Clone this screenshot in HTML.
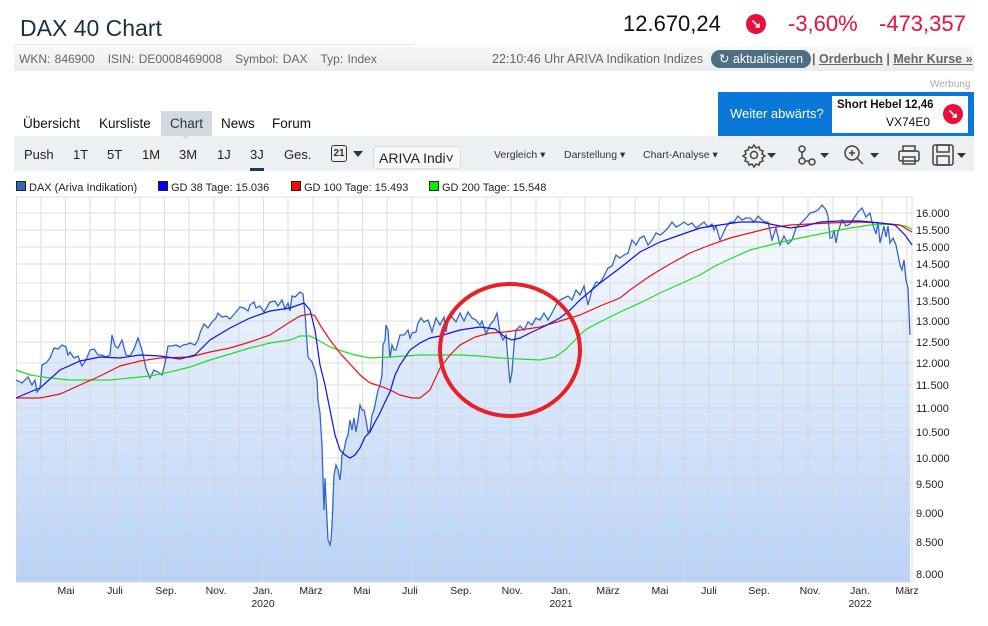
<!DOCTYPE html>
<html><head><meta charset="utf-8"><style>
body{margin:0;width:988px;height:626px;background:#fff;font-family:"Liberation Sans",sans-serif;position:relative;overflow:hidden}
.a{position:absolute;white-space:nowrap}
</style></head><body>
<div class="a" style="left:20px;top:15px;font-size:23px;color:#1b2f45">DAX 40 Chart</div>
<div class="a" style="left:14px;top:44px;width:400px;height:1px;background:#e3e3e3"></div>
<div class="a" style="left:14px;top:47px;width:960px;height:24px;background:linear-gradient(#f8f8f8,#ececec)"></div>
<div class="a" style="left:19px;top:52px;font-size:12px;color:#666;word-spacing:1px">WKN: 846900 &nbsp;&nbsp;ISIN: DE0008469008 &nbsp;&nbsp;Symbol: DAX &nbsp;&nbsp;Typ: Index</div>
<div class="a" style="left:492px;top:52px;font-size:12.5px;color:#666">22:10:46 Uhr ARIVA Indikation Indizes</div>
<div class="a" style="left:711px;top:50px;width:100px;height:18px;border-radius:9px;background:#4c6f86;color:#fff;font-size:12.5px;line-height:18px;text-align:center">↻ aktualisieren</div>
<div class="a" style="left:812px;top:52px;font-size:12.5px;color:#666;font-weight:bold">| <u>Orderbuch</u> | <u>Mehr Kurse »</u></div>
<div class="a" style="left:623px;top:11px;font-size:22px;color:#111">12.670,24</div>
<div class="a" style="left:746px;top:14px;width:20px;height:20px;border-radius:50%;background:#e8103a;color:#fff;font-size:13px;line-height:20px;text-align:center;font-weight:bold">↘</div>
<div class="a" style="left:788px;top:11px;font-size:22px;color:#e8103a">-3,60%</div>
<div class="a" style="left:879px;top:11px;font-size:22px;color:#e8103a">-473,357</div>
<div class="a" style="left:930px;top:79px;font-size:10px;color:#aaa">Werbung</div>
<div class="a" style="left:718px;top:92px;width:256px;height:44px;background:#0a78d8"></div>
<div class="a" style="left:730px;top:106px;font-size:13px;color:#fff">Weiter abwärts?</div>
<div class="a" style="left:832px;top:96px;width:136px;height:37px;background:#fff"></div>
<div class="a" style="left:837px;top:99px;font-size:11.5px;font-weight:bold;color:#111">Short Hebel 12,46</div>
<div class="a" style="left:886px;top:115px;font-size:12px;color:#111">VX74E0</div>
<div class="a" style="left:943px;top:104px;width:20px;height:20px;border-radius:50%;background:#e8103a;color:#fff;font-size:13px;line-height:20px;text-align:center;font-weight:bold">↘</div>
<div class="a" style="left:161px;top:111px;width:51px;height:25px;background:#d1dae1"></div>
<div class="a" style="left:14px;top:136px;width:960px;height:35px;background:#edf0f3"></div>
<div class="a" style="left:180px;top:133px;width:0;height:0;border-left:6px solid transparent;border-right:6px solid transparent;border-top:6px solid #d1dae1"></div>
<div class="a" style="left:23px;top:116px;font-size:13.5px;color:#111">Übersicht</div>
<div class="a" style="left:99px;top:116px;font-size:13.5px;color:#111">Kursliste</div>
<div class="a" style="left:170px;top:116px;font-size:13.5px;color:#333">Chart</div>
<div class="a" style="left:221px;top:116px;font-size:13.5px;color:#111">News</div>
<div class="a" style="left:272px;top:116px;font-size:13.5px;color:#111">Forum</div>
<div class="a" style="left:24px;top:147px;font-size:13px;color:#222">Push</div>
<div class="a" style="left:73px;top:147px;font-size:13px;color:#222">1T</div>
<div class="a" style="left:107px;top:147px;font-size:13px;color:#222">5T</div>
<div class="a" style="left:142px;top:147px;font-size:13px;color:#222">1M</div>
<div class="a" style="left:179px;top:147px;font-size:13px;color:#222">3M</div>
<div class="a" style="left:217px;top:147px;font-size:13px;color:#222">1J</div>
<div class="a" style="left:250px;top:147px;font-size:13px;color:#222">3J</div>
<div class="a" style="left:250px;top:168px;width:14px;height:3px;background:#1d3a55"></div>
<div class="a" style="left:284px;top:147px;font-size:13px;color:#222">Ges.</div>
<div class="a" style="left:331px;top:145px;width:14px;height:15px;border:1.5px solid #333;border-radius:3px;font-size:10px;font-weight:bold;text-align:center;line-height:16px;color:#333">21</div>
<div class="a" style="left:353px;top:151px;border-left:5px solid transparent;border-right:5px solid transparent;border-top:6px solid #333"></div>
<div class="a" style="left:373px;top:146px;width:88px;height:23px;background:#f7f7f7;border:1px solid #ddd;border-radius:4px;font-size:14px;line-height:23px;padding-left:5px;box-sizing:border-box;color:#222">ARIVA Indi˅</div>
<div class="a" style="left:494px;top:149px;font-size:10.5px;color:#333">Vergleich ▾</div>
<div class="a" style="left:564px;top:149px;font-size:10.5px;color:#333">Darstellung ▾</div>
<div class="a" style="left:643px;top:149px;font-size:10.5px;color:#333">Chart-Analyse ▾</div>
<svg class="a" style="left:740px;top:140px" width="240" height="30" viewBox="0 0 240 30">
<g fill="none" stroke="#444" stroke-width="1.5">
<circle cx="14" cy="15" r="3.5"/><path d="M14 5l2 3 3-1 1 3 3 1-1 3 3 2-3 2 1 3-3 1-1 3-3-1-2 3-2-3-3 1-1-3-3-1 1-3-3-2 3-2-1-3 3-1 1-3 3 1z"/>
<circle cx="62" cy="9" r="3"/><circle cx="62" cy="21" r="3"/><circle cx="72" cy="22" r="3"/><path d="M62 12v6M65 21h4"/>
<circle cx="112" cy="13" r="7"/><path d="M117 18l6 6M109 13h6M112 10v6"/>
<rect x="159" y="11" width="20" height="10" rx="2"/><rect x="163" y="6" width="12" height="5"/><rect x="163" y="17" width="12" height="7"/>
<rect x="193" y="5" width="20" height="20" rx="2"/><rect x="197" y="5" width="12" height="7"/><rect x="197" y="16" width="12" height="9"/>
</g><g fill="#333"><path d="M27 13h9l-4.5 5z"/><path d="M80 13h9l-4.5 5z"/><path d="M130 13h9l-4.5 5z"/><path d="M217 13h9l-4.5 5z"/></g></svg>
<div class="a" style="left:16px;top:181px;font-size:11px;color:#222"><span style="display:inline-block;width:8px;height:8px;background:#3366bb;border:1px solid #222;margin-right:3px"></span>DAX (Ariva Indikation)</div>
<div class="a" style="left:158px;top:181px;font-size:11px;color:#222"><span style="display:inline-block;width:8px;height:8px;background:#0000ff;border:1px solid #222;margin-right:3px"></span>GD 38 Tage: 15.036</div>
<div class="a" style="left:291px;top:181px;font-size:11px;color:#222"><span style="display:inline-block;width:8px;height:8px;background:#ff0000;border:1px solid #222;margin-right:3px"></span>GD 100 Tage: 15.493</div>
<div class="a" style="left:429px;top:181px;font-size:11px;color:#222"><span style="display:inline-block;width:8px;height:8px;background:#00ee00;border:1px solid #222;margin-right:3px"></span>GD 200 Tage: 15.548</div>
<svg class="a" style="left:0;top:0" width="988" height="626" viewBox="0 0 988 626">
<defs><linearGradient id="g" x1="0" y1="197" x2="0" y2="582" gradientUnits="userSpaceOnUse"><stop offset="0" stop-color="#fafcff"/><stop offset="1" stop-color="#b9d2f6"/></linearGradient></defs>
<polygon fill="url(#g)" points="16,582 16,380 22,383 28,377 32,385 35,380 37,392 40,388 42,365 46,363 50,358 54,348 58,349 62,345 66,347 68,355 70,352 74,358 78,356 82,366 86,360 90,350 94,349 98,355 102,355 106,357 110,355 112,335 115,346 118,348 122,340 126,355 130,356 134,349 138,338 142,350 146,368 150,378 154,370 158,372 162,375 165,363 168,346 172,346 176,345 180,347 183,345 188,344 190,343 195,345 198,340 200,333 204,324 208,328 212,322 216,318 218,313 222,317 226,316 230,319 236,312 240,307 244,308 248,311 250,305 254,302 256,308 260,306 264,312 270,302 275,301 278,306 282,300 285,309 288,303 290,311 292,296 295,297 300,292 303,294 305,313 308,357 312,362 315,370 317,380 318,400 320,413 321,430 322,445 323,480 324,510 325,478 326,500 327,520 328,540 330,545 331,540 332,525 333,500 334,475 336,465 338,470 340,480 341,470 342,455 344,450 346,440 348,435 350,420 352,430 354,418 356,432 358,420 360,405 362,410 364,410 366,420 368,432 370,430 372,415 374,410 376,400 378,390 380,385 382,375 383,345 385,340 386,325 388,330 389,345 390,358 392,345 394,350 396,350 400,335 404,335 408,330 410,338 412,333 416,332 418,323 421,318 424,322 428,320 432,332 436,318 440,325 444,317 446,332 448,320 452,317 456,322 460,313 464,321 468,312 472,318 476,320 480,325 482,321 486,334 490,325 494,320 497,313 500,333 503,340 506,335 508,360 510,383 512,372 514,345 516,330 520,326 524,330 528,322 532,325 536,318 540,320 544,313 548,320 552,313 556,305 560,300 564,298 568,296 572,300 576,290 580,295 584,286 588,305 592,290 596,282 600,283 604,276 608,268 612,266 616,255 620,258 624,255 628,253 632,240 636,245 640,238 644,236 648,245 652,240 656,233 660,235 664,232 668,228 672,222 676,227 680,225 684,222 688,225 692,223 696,228 700,225 704,222 708,227 712,224 714,230 716,226 720,240 722,236 726,227 730,222 734,222 738,216 742,220 746,218 750,218 754,222 758,216 762,220 765,222 768,222 772,240 776,228 780,245 784,236 788,244 792,240 796,228 800,224 806,218 810,213 814,212 818,210 822,205 826,210 828,216 830,238 832,238 834,230 836,243 838,232 842,220 846,226 850,224 854,218 858,212 862,208 866,217 870,213 872,222 876,234 878,222 880,243 884,226 886,237 888,226 890,243 893,238 896,245 898,255 900,265 902,270 904,260 906,280 908,288 910,335 910,582"/>
<g stroke="#d4d4d8" stroke-width="1" opacity="0.8">
<path d="M16 197H912M16 213H912M16 230H912M16 247H912M16 264H912M16 283H912M16 301H912M16 321H912M16 342H912M16 363H912M16 385H912M16 408H912M16 432H912M16 458H912M16 484H912M16 513H912M16 542H912M16 574H912M16 582H912"/>
<path d="M16.5 197V582M41 197V582M65.5 197V582M90 197V582M115 197V582M140 197V582M164.5 197V582M189 197V582M214 197V582M239 197V582M263.5 197V582M288 197V582M313 197V582M338 197V582M362.5 197V582M387 197V582M412 197V582M437 197V582M461 197V582M486 197V582M511 197V582M536 197V582M560 197V582M585 197V582M610 197V582M635 197V582M659 197V582M684 197V582M709 197V582M734 197V582M758 197V582M783 197V582M808 197V582M833 197V582M857 197V582M882 197V582M907 197V582M912 197V582"/>
</g>
<polyline fill="none" stroke="#3366cc" stroke-width="1.3" points="16,380 22,383 28,377 32,385 35,380 37,392 40,388 42,365 46,363 50,358 54,348 58,349 62,345 66,347 68,355 70,352 74,358 78,356 82,366 86,360 90,350 94,349 98,355 102,355 106,357 110,355 112,335 115,346 118,348 122,340 126,355 130,356 134,349 138,338 142,350 146,368 150,378 154,370 158,372 162,375 165,363 168,346 172,346 176,345 180,347 183,345 188,344 190,343 195,345 198,340 200,333 204,324 208,328 212,322 216,318 218,313 222,317 226,316 230,319 236,312 240,307 244,308 248,311 250,305 254,302 256,308 260,306 264,312 270,302 275,301 278,306 282,300 285,309 288,303 290,311 292,296 295,297 300,292 303,294 305,313 308,357 312,362 315,370 317,380 318,400 320,413 321,430 322,445 323,480 324,510 325,478 326,500 327,520 328,540 330,545 331,540 332,525 333,500 334,475 336,465 338,470 340,480 341,470 342,455 344,450 346,440 348,435 350,420 352,430 354,418 356,432 358,420 360,405 362,410 364,410 366,420 368,432 370,430 372,415 374,410 376,400 378,390 380,385 382,375 383,345 385,340 386,325 388,330 389,345 390,358 392,345 394,350 396,350 400,335 404,335 408,330 410,338 412,333 416,332 418,323 421,318 424,322 428,320 432,332 436,318 440,325 444,317 446,332 448,320 452,317 456,322 460,313 464,321 468,312 472,318 476,320 480,325 482,321 486,334 490,325 494,320 497,313 500,333 503,340 506,335 508,360 510,383 512,372 514,345 516,330 520,326 524,330 528,322 532,325 536,318 540,320 544,313 548,320 552,313 556,305 560,300 564,298 568,296 572,300 576,290 580,295 584,286 588,305 592,290 596,282 600,283 604,276 608,268 612,266 616,255 620,258 624,255 628,253 632,240 636,245 640,238 644,236 648,245 652,240 656,233 660,235 664,232 668,228 672,222 676,227 680,225 684,222 688,225 692,223 696,228 700,225 704,222 708,227 712,224 714,230 716,226 720,240 722,236 726,227 730,222 734,222 738,216 742,220 746,218 750,218 754,222 758,216 762,220 765,222 768,222 772,240 776,228 780,245 784,236 788,244 792,240 796,228 800,224 806,218 810,213 814,212 818,210 822,205 826,210 828,216 830,238 832,238 834,230 836,243 838,232 842,220 846,226 850,224 854,218 858,212 862,208 866,217 870,213 872,222 876,234 878,222 880,243 884,226 886,237 888,226 890,243 893,238 896,245 898,255 900,265 902,270 904,260 906,280 908,288 910,335"/>
<polyline fill="none" stroke="#22dd22" stroke-width="1.2" points="16,370 30,375 50,378 70,380 90,380 110,380 130,378 150,376 170,372 190,367 210,360 230,354 250,348 270,343 290,340 300,336 310,336 318,340 330,347 345,352 355,355 370,358 390,357 420,355 440,355 460,355 480,356 500,358 520,359 540,360 555,357 565,350 575,340 585,330 600,322 620,312 640,303 660,293 680,284 700,275 715,266 730,259 750,250 770,245 790,240 810,236 830,232 850,228 870,225 890,224 905,226 912,229"/>
<polyline fill="none" stroke="#ee1111" stroke-width="1.2" points="16,398 40,398 60,394 80,385 100,376 120,366 140,361 160,358 190,357 210,352 230,348 250,342 270,335 290,322 300,316 310,314 315,316 320,325 330,340 340,353 350,364 360,375 370,383 380,386 390,390 400,395 412,398 420,398 430,390 440,368 450,355 460,345 475,337 490,333 505,332 520,330 540,327 560,321 580,315 600,306 620,298 630,290 650,276 670,264 690,253 710,245 730,238 750,233 770,228 790,225 810,224 830,223 860,222 880,223 900,225 912,232"/>
<polyline fill="none" stroke="#1111ee" stroke-width="1.2" points="16,398 30,392 40,388 60,370 80,361 100,357 120,358 140,355 160,356 180,359 195,355 210,340 230,328 250,318 270,311 290,308 304,303 310,310 315,330 320,365 325,385 330,410 335,435 340,450 345,455 350,458 355,455 360,448 365,437 370,432 375,422 380,413 385,402 390,392 395,375 400,365 410,350 420,343 430,338 440,336 460,330 480,327 495,329 505,337 512,340 520,338 530,333 545,326 560,318 570,310 580,300 600,283 620,268 640,252 660,242 680,235 700,228 720,225 740,222 760,222 775,225 790,228 805,226 820,222 840,221 860,221 880,223 895,225 905,235 912,245"/>
<ellipse cx="510" cy="350" rx="70" ry="66" fill="none" stroke="#e8202a" stroke-width="4"/>
<g font-family="Liberation Sans,sans-serif" font-size="11" fill="#222">
<text x="916" y="217">16.000</text><text x="916" y="234">15.500</text><text x="916" y="251">15.000</text><text x="916" y="268">14.500</text><text x="916" y="287">14.000</text><text x="916" y="305">13.500</text><text x="916" y="325">13.000</text><text x="916" y="346">12.500</text><text x="916" y="367">12.000</text><text x="916" y="389">11.500</text><text x="916" y="412">11.000</text><text x="916" y="436">10.500</text><text x="916" y="462">10.000</text><text x="916" y="488">9.500</text><text x="916" y="517">9.000</text><text x="916" y="546">8.500</text><text x="916" y="578">8.000</text>
</g>
<g font-family="Liberation Sans,sans-serif" font-size="10.5" fill="#222" text-anchor="middle">
<text x="66" y="594">Mai</text><text x="115" y="594">Juli</text><text x="166" y="594">Sep.</text><text x="216" y="594">Nov.</text><text x="263" y="594">Jan.</text><text x="311" y="594">März</text><text x="362" y="594">Mai</text><text x="410" y="594">Juli</text><text x="461" y="594">Sep.</text><text x="512" y="594">Nov.</text><text x="561" y="594">Jan.</text><text x="608" y="594">März</text><text x="660" y="594">Mai</text><text x="709" y="594">Juli</text><text x="759" y="594">Sep.</text><text x="810" y="594">Nov.</text><text x="860" y="594">Jan.</text><text x="907" y="594">März</text>
<text x="263" y="607">2020</text><text x="561" y="607">2021</text><text x="860" y="607">2022</text>
</g>
</svg>
</body></html>
